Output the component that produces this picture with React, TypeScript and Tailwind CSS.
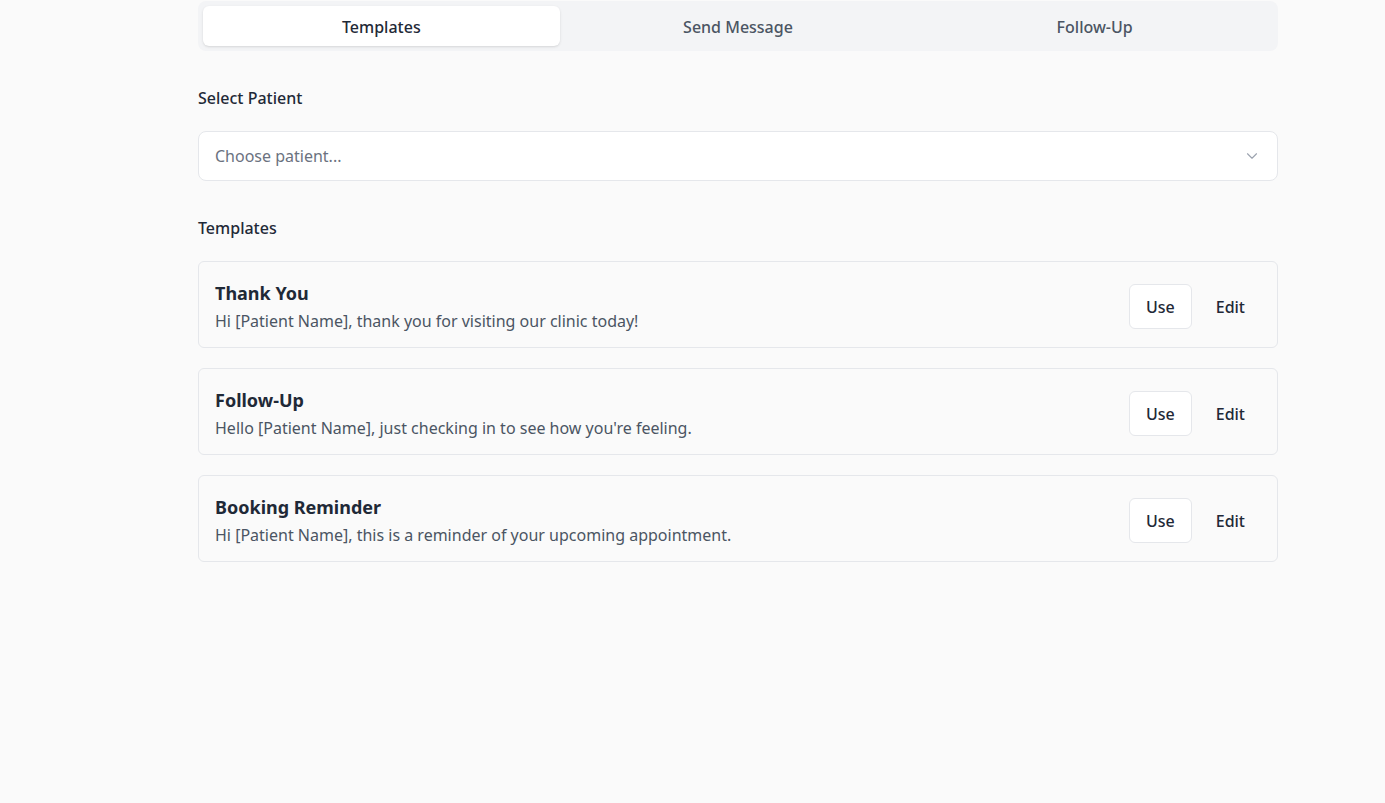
import React, { useState } from 'react';
import { ChevronDown } from 'lucide-react';

const tabs = ['Templates', 'Send Message', 'Follow-Up'];

const templates = [
  { title: 'Thank You', body: 'Hi [Patient Name], thank you for visiting our clinic today!' },
  { title: 'Follow-Up', body: "Hello [Patient Name], just checking in to see how you're feeling." },
  { title: 'Booking Reminder', body: 'Hi [Patient Name], this is a reminder of your upcoming appointment.' },
];

const TemplateCard: React.FC<{ title: string; body: string }> = ({ title, body }) => (
  <div className="flex items-center justify-between rounded-md border border-[#e5e7eb] bg-[#fafafa] px-4 pt-[17px] pb-[13px]">
    <div>
      <h3 className="text-[18px] font-bold leading-[28px] text-[#1f2937]">{title}</h3>
      <p className="mt-px text-base leading-[26px] text-[#4b5563]">{body}</p>
    </div>
    <div className="flex items-center gap-2">
      <button className="h-[45px] rounded-md border border-[#e5e7eb] bg-white px-4 text-base font-medium text-[#1f2937]">
        Use
      </button>
      <button className="h-[45px] rounded-md px-4 text-base font-medium text-[#1f2937]">Edit</button>
    </div>
  </div>
);

export default function App() {
  const [active, setActive] = useState(0);

  return (
    <div className="min-h-screen bg-[#fafafa] font-['Noto_Sans','Open_Sans',sans-serif]">
      <div className="ml-[198px] w-[1080px] pt-px">
        <div className="grid grid-cols-3 rounded-lg bg-[#f3f4f6] p-[5px]">
          {tabs.map((t, i) => (
            <button
              key={t}
              onClick={() => setActive(i)}
              className={
                i === active
                  ? 'h-10 rounded-md bg-white pt-[2px] text-base font-medium text-[#1f2937] shadow-sm'
                  : 'h-10 rounded-md pt-[2px] text-base font-medium text-[#4b5563]'
              }
            >
              {t}
            </button>
          ))}
        </div>

        <div className="mt-[35px] text-base font-medium leading-6 text-[#1f2937]">Select Patient</div>
        <div className="mt-[21px] flex h-[50px] items-center justify-between rounded-lg border border-[#e5e7eb] bg-white px-4">
          <span className="text-base text-[#6b7280]">Choose patient...</span>
          <ChevronDown className="h-[18px] w-[18px] text-[#9ca3af]" strokeWidth={1.5} />
        </div>

        <div className="mt-[35px] text-base font-medium leading-6 text-[#1f2937]">Templates</div>
        <div className="mt-[21px] flex flex-col gap-5">
          {templates.map((t) => (
            <TemplateCard key={t.title} title={t.title} body={t.body} />
          ))}
        </div>
      </div>
    </div>
  );
}
